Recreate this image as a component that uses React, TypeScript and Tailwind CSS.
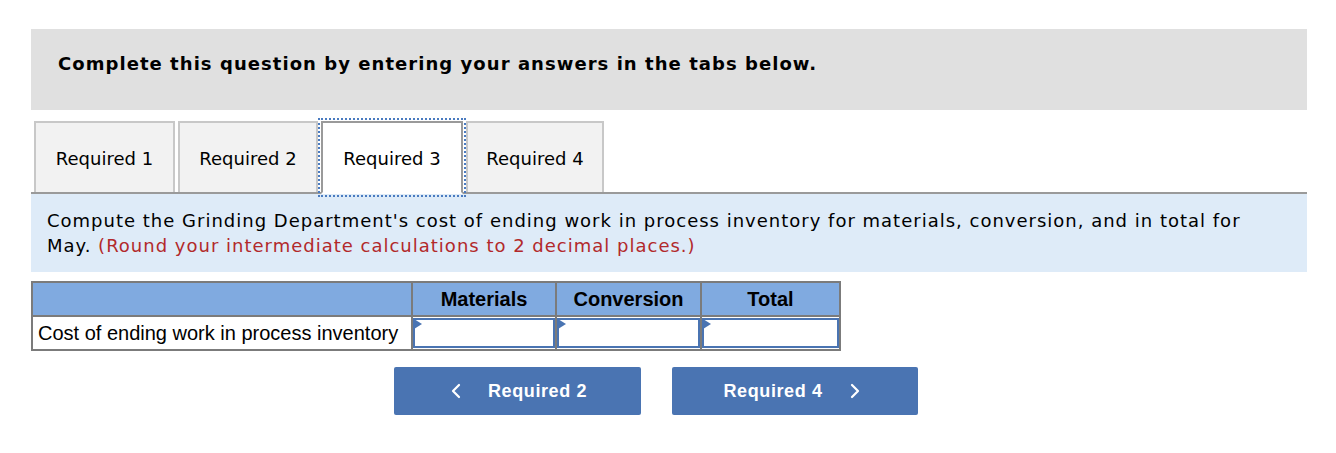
import { ChevronLeft, ChevronRight } from "lucide-react";

const tabs = [
  { label: "Required 1", w: "w-[141px]" },
  { label: "Required 2", w: "w-[140px]" },
  { label: "Required 3", w: "w-[142px]", active: true },
  { label: "Required 4", w: "w-[138px]" },
];

function InputCell() {
  return (
    <td className="border-2 border-[#7b7b7b] bg-white p-0">
      <div className="relative h-[30px] border-2 border-[#4a74b2] bg-white">
        <span className="absolute -left-[1px] -top-[1px] h-0 w-0 border-y-[5px] border-l-[8px] border-y-transparent border-l-[#4a74b2]" />
      </div>
    </td>
  );
}

export default function App() {
  return (
    <div className="min-h-[453px] bg-white pl-[31px] pt-[29px] font-['DejaVu_Sans',sans-serif] text-black">
      <div className="w-[1276px]">
        {/* heading bar */}
        <div className="h-[81px] bg-[#e0e0e0] pl-[27px] pt-[21px] text-[18px] font-bold tracking-[1.05px]">
          Complete this question by entering your answers in the tabs below.
        </div>

        {/* tabs */}
        <div className="mt-[11px] flex gap-[3px] border-b-2 border-[#9a9a9a] pl-[3px]">
          {tabs.map((t) =>
            t.active ? (
              <div
                key={t.label}
                className={`relative z-10 -mb-[2px] flex h-[73px] ${t.w} items-center justify-center border-2 border-[#9a9a9a] border-b-white bg-white pt-[2px] text-[18px] outline-2 outline-offset-[1px] outline-dotted outline-[#4a7bc0]`}
              >
                {t.label}
              </div>
            ) : (
              <div
                key={t.label}
                className={`flex h-[71px] ${t.w} items-center justify-center border-2 border-b-0 border-[#c8c8c8] bg-[#f2f2f2] pt-[2px] text-[18px]`}
              >
                {t.label}
              </div>
            )
          )}
        </div>

        {/* instructions */}
        <div className="h-[78px] bg-[#deebf8] px-[16px] pt-[14px] text-[18px] leading-[25px] tracking-[1px]">
          Compute the Grinding Department's cost of ending work in process inventory for materials, conversion, and in total for May.{" "}
          <span className="text-[#b2292b]">(Round your intermediate calculations to 2 decimal places.)</span>
        </div>

        {/* table */}
        <table className="mt-[9px] border-collapse border-2 border-[#7b7b7b] font-['Liberation_Sans',Arial,sans-serif] text-[20px]">
          <thead>
            <tr className="h-[34px] bg-[#80aae0]">
              <th className="w-[380px] border-2 border-[#7b7b7b]" />
              <th className="w-[144px] border-2 border-[#7b7b7b] font-bold">Materials</th>
              <th className="w-[145px] border-2 border-[#7b7b7b] font-bold">Conversion</th>
              <th className="w-[139px] border-2 border-[#7b7b7b] font-bold">Total</th>
            </tr>
          </thead>
          <tbody>
            <tr className="h-[34px]">
              <td className="border-2 border-[#7b7b7b] bg-white px-[5px] text-left leading-[24px]">
                Cost of ending work in process inventory
              </td>
              <InputCell />
              <InputCell />
              <InputCell />
            </tr>
          </tbody>
        </table>

        {/* navigation */}
        <div className="mt-[16px] flex gap-[31px] pl-[363px] font-['Liberation_Sans',Arial,sans-serif] text-[18px] font-bold tracking-[0.6px] text-white">
          <button className="flex h-[48px] w-[247px] items-center justify-center gap-[20px] rounded-[2px] bg-[#4a74b2]">
            <ChevronLeft className="h-[24px] w-[24px]" strokeWidth={2.25} />
            <span className="pr-[4px]">Required 2</span>
          </button>
          <button className="flex h-[48px] w-[246px] items-center justify-center gap-[20px] rounded-[2px] bg-[#4a74b2]">
            <span>Required 4</span>
            <ChevronRight className="h-[24px] w-[24px]" strokeWidth={2.25} />
          </button>
        </div>
      </div>
    </div>
  );
}
